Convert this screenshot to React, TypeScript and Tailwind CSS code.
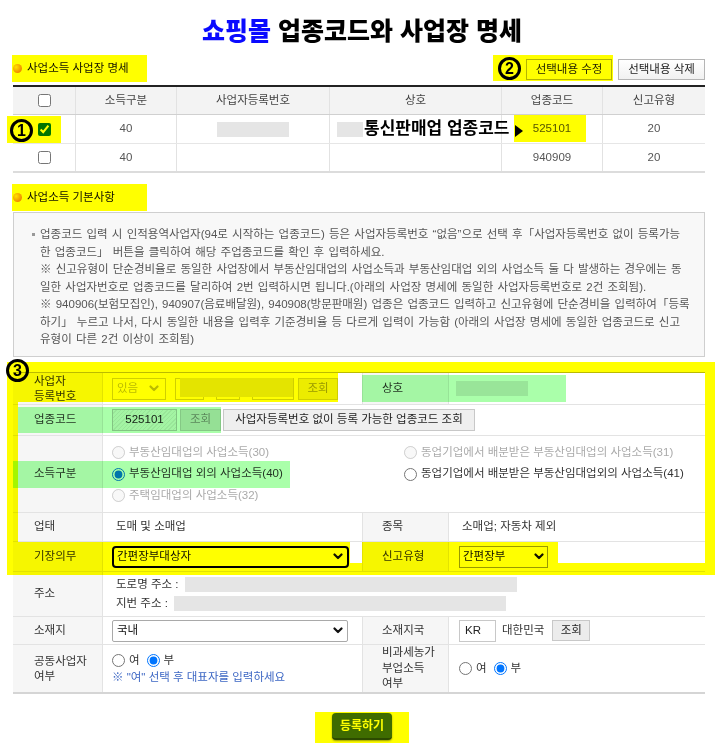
import React from "react";

const FONT = "font-['Liberation_Sans','Noto_Sans_CJK_KR',sans-serif]";
const HL = "pointer-events-none absolute mix-blend-multiply";
const BOX = "ml-[13px] w-[692px]";
const T1_COLS = "grid grid-cols-[63px_101px_153px_172px_101px_102px]";
const ROW = "grid grid-cols-[90px_259px_87px_256px] border-b border-[#e3e3e3]";
const LBL = "flex items-center border-r border-[#e3e3e3] bg-[#f6f6f6] pl-[21px] text-[#333]";
const LBL2 = "flex items-center border-x border-[#e3e3e3] bg-[#f6f6f6] pl-[19px] text-[#333]";

const infoLines = [
	"업종코드 입력 시 인적용역사업자(94로 시작하는 업종코드) 등은 사업자등록번호 “없음”으로 선택 후「사업자등록번호 없이 등록가능",
	"한 업종코드」 버튼을 클릭하여 해당 주업종코드를 확인 후 입력하세요.",
	"※ 신고유형이 단순경비율로 동일한 사업장에서 부동산임대업의 사업소득과 부동산임대업 외의 사업소득 둘 다 발생하는 경우에는 동",
	"일한 사업자번호로 업종코드를 달리하여 2번 입력하시면 됩니다.(아래의 사업장 명세에 동일한 사업자등록번호로 2건 조회됨).",
	"※ 940906(보험모집인), 940907(음료배달원), 940908(방문판매원) 업종은 업종코드 입력하고 신고유형에 단순경비을 입력하여「등록",
	"하기」 누르고 나서, 다시 동일한 내용을 입력후 기준경비율 등 다르게 입력이 가능함 (아래의 사업장 명세에 동일한 업종코드로 신고",
	"유형이 다른 2건 이상이 조회됨)",
];

function Chevron({ color = "#222" }: { color?: string }) {
	return (
		<svg width="10" height="7" viewBox="0 0 10 7" className="shrink-0">
			<path d="M1.5 1.5 L5 5 L8.5 1.5" fill="none" stroke={color} strokeWidth="2.2" strokeLinecap="round" strokeLinejoin="round" />
		</svg>
	);
}

function SectionTitle({ children }: { children: React.ReactNode }) {
	return (
		<div className="-ml-[1px] flex h-[27px] items-center pl-[1px] text-[#111]">
			<span className="h-[9px] w-[9px] rounded-full bg-[radial-gradient(circle_at_35%_35%,#ffe2a8,#f08a00_70%)]" />
			<span className="ml-[5px]">{children}</span>
		</div>
	);
}

function Radio({ label, checked = false, disabled = false, className = "" }: { label: string; checked?: boolean; disabled?: boolean; className?: string }) {
	return (
		<label className={`flex items-center gap-[4px] whitespace-nowrap ${disabled ? "text-[#aaa]" : "text-[#333]"} ${className}`}>
			<input type="radio" defaultChecked={checked} disabled={disabled} className="m-0 h-[13px] w-[13px] shrink-0" />
			{label}
		</label>
	);
}

function Circled({ n, className }: { n: string; className: string }) {
	return (
		<div className={`pointer-events-none absolute flex h-[23px] w-[23px] items-center justify-center rounded-full border-[3px] border-black text-[16px] font-bold leading-none text-black ${className}`}>
			{n}
		</div>
	);
}

export default function App() {
	return (
		<div className={`relative h-[747px] w-[724px] overflow-hidden bg-white text-[11.5px] leading-none text-[#333] ${FONT}`}>
			<h1 className="h-[55px] pt-[15px] text-center text-[25px] font-black leading-[32px] text-black">
				<span className="text-[#0a0aff]">쇼핑몰</span> 업종코드와 사업장 명세
			</h1>

			{/* 사업장 명세 */}
			<div className={`${BOX} flex h-[30px] items-start justify-between`}>
				<SectionTitle>사업소득 사업장 명세</SectionTitle>
				<div className="flex gap-[6px] pt-[4px]">
					<button className="h-[21px] w-[86px] border border-[#b5b5b5] bg-white text-[#222]">선택내용 수정</button>
					<button className="h-[21px] w-[87px] border border-[#b5b5b5] bg-gradient-to-b from-white to-[#f1f1f1] text-[#222]">선택내용 삭제</button>
				</div>
			</div>

			<div className={`${BOX} border-t-2 border-[#222]`}>
				<div className={`${T1_COLS} h-[28px] border-b border-[#d0d0d0] bg-[#f3f3f3] text-[#444]`}>
					<div className="flex items-center justify-center border-r border-[#e2e2e2]">
						<input type="checkbox" className="m-0 h-[13px] w-[13px]" />
					</div>
					<div className="flex items-center justify-center border-r border-[#e2e2e2]">소득구분</div>
					<div className="flex items-center justify-center border-r border-[#e2e2e2]">사업자등록번호</div>
					<div className="flex items-center justify-center border-r border-[#e2e2e2]">상호</div>
					<div className="flex items-center justify-center border-r border-[#e2e2e2]">업종코드</div>
					<div className="flex items-center justify-center">신고유형</div>
				</div>
				<div className={`${T1_COLS} h-[29px] border-b border-[#e6e6e6] text-[#555]`}>
					<div className="flex items-center justify-center border-r border-[#e2e2e2]">
						<input type="checkbox" defaultChecked className="m-0 h-[13px] w-[13px]" />
					</div>
					<div className="flex items-center justify-center border-r border-[#e2e2e2]">40</div>
					<div className="flex items-center justify-center border-r border-[#e2e2e2]">
						<span className="h-[15px] w-[72px] bg-[#e5e5e5]" />
					</div>
					<div className="flex items-center border-r border-[#e2e2e2] pl-[7px]">
						<span className="h-[15px] w-[26px] bg-[#e5e5e5]" />
					</div>
					<div className="flex items-center justify-center border-r border-[#e2e2e2]">525101</div>
					<div className="flex items-center justify-center">20</div>
				</div>
				<div className={`${T1_COLS} h-[29px] border-b-2 border-[#dcdcdc] text-[#555]`}>
					<div className="flex items-center justify-center border-r border-[#e2e2e2]">
						<input type="checkbox" className="m-0 h-[13px] w-[13px]" />
					</div>
					<div className="flex items-center justify-center border-r border-[#e2e2e2]">40</div>
					<div className="border-r border-[#e2e2e2]" />
					<div className="border-r border-[#e2e2e2]" />
					<div className="flex items-center justify-center border-r border-[#e2e2e2]">940909</div>
					<div className="flex items-center justify-center">20</div>
				</div>
			</div>

			{/* 기본사항 */}
			<div className={`${BOX} mt-[11px]`}>
				<SectionTitle>사업소득 기본사항</SectionTitle>
			</div>
			<div className={`${BOX} mt-[1px] h-[145px] border border-[#cfcfcf] bg-[#f8f8f8] pt-[13px] leading-[17.5px] text-[#555] [word-spacing:1px]`}>
				{infoLines.map((line, i) => (
					<div key={i} className="flex items-center whitespace-nowrap pl-[18px]">
						<span className={`mr-[5px] h-[3px] w-[3px] ${i === 0 ? "bg-[#999]" : "bg-transparent"}`} />
						{line}
					</div>
				))}
			</div>

			{/* 입력 폼 */}
			<div className={`${BOX} mt-[15px] border-t border-[#bbb]`}>
				<div className={`${ROW} h-[32px]`}>
					<div className={`${LBL} leading-[15px]`}>
						사업자
						<br />
						등록번호
					</div>
					<div className="flex items-center pl-[9px]">
						<div className="flex h-[22px] w-[54px] items-center justify-between border border-[#cfcfcf] bg-white pl-[4px] pr-[6px] text-[#bbb]">
							있음
							<Chevron color="#bbb" />
						</div>
						<span className="ml-[9px] h-[22px] w-[29px] border border-[#cfcfcf] bg-white" />
						<span className="ml-[12px] h-[22px] w-[24px] border border-[#cfcfcf] bg-white" />
						<span className="ml-[12px] h-[22px] w-[42px] border border-[#cfcfcf] bg-white" />
						<button className="ml-[4px] h-[22px] w-[40px] border border-[#cfcfcf] bg-[#ececec] text-[#999]">조회</button>
					</div>
					<div className={LBL2}>상호</div>
					<div className="flex items-center pl-[7px]">
						<span className="h-[15px] w-[72px] bg-[#e5e5e5]" />
					</div>
				</div>

				<div className="grid h-[31px] grid-cols-[90px_602px] border-b border-[#e3e3e3]">
					<div className={LBL}>업종코드</div>
					<div className="flex items-center pl-[9px]">
						<div className="flex h-[22px] w-[65px] items-center justify-center border border-[#c4c4c4] bg-[repeating-linear-gradient(135deg,#f4f4f4_0px,#f4f4f4_2px,#e6e6e6_2px,#e6e6e6_3px)] text-[#222]">
							525101
						</div>
						<button className="ml-[3px] h-[22px] w-[41px] border border-[#c8c8c8] bg-[#e0e0e0] text-[#888]">조회</button>
						<button className="ml-[2px] h-[22px] w-[252px] whitespace-nowrap border border-[#c8c8c8] bg-[#efefef] text-[#222]">
							사업자등록번호 없이 등록 가능한 업종코드 조회
						</button>
					</div>
				</div>

				<div className="grid h-[77px] grid-cols-[90px_602px] border-b border-[#e3e3e3]">
					<div className={LBL}>소득구분</div>
					<div className="grid grid-cols-[292px_1fr] content-center pl-[9px]">
						<div className="flex flex-col">
							<Radio label="부동산임대업의 사업소득(30)" disabled className="h-[21.5px]" />
							<Radio label="부동산임대업 외의 사업소득(40)" checked className="h-[21.5px]" />
							<Radio label="주택임대업의 사업소득(32)" disabled className="h-[21.5px]" />
						</div>
						<div className="flex flex-col">
							<Radio label="동업기업에서 배분받은 부동산임대업의 사업소득(31)" disabled className="h-[21.5px]" />
							<Radio label="동업기업에서 배분받은 부동산임대업외의 사업소득(41)" className="h-[21.5px]" />
						</div>
					</div>
				</div>

				<div className={`${ROW} h-[29px]`}>
					<div className={LBL}>업태</div>
					<div className="flex items-center pl-[13px]">도매 및 소매업</div>
					<div className={LBL2}>종목</div>
					<div className="flex items-center pl-[13px]">소매업; 자동차 제외</div>
				</div>

				<div className={`${ROW} h-[30px]`}>
					<div className={LBL}>기장의무</div>
					<div className="flex items-center pl-[9px]">
						<div className="flex h-[22px] w-[237px] items-center justify-between rounded-[4px] border-2 border-black bg-white pl-[3px] pr-[4px] text-[#111]">
							간편장부대상자
							<Chevron color="#111" />
						</div>
					</div>
					<div className={LBL2}>신고유형</div>
					<div className="flex items-center pl-[10px]">
						<div className="flex h-[22px] w-[89px] items-center justify-between border border-[#999] bg-white pl-[3px] pr-[3px] text-[#111]">
							간편장부
							<Chevron color="#111" />
						</div>
					</div>
				</div>

				<div className="grid h-[45px] grid-cols-[90px_602px] border-b border-[#e3e3e3]">
					<div className={LBL}>주소</div>
					<div className="flex flex-col justify-center pl-[13px]">
						<div className="flex h-[19px] items-center">
							도로명 주소 :<span className="ml-[6px] h-[15px] w-[332px] bg-[#e5e5e5]" />
						</div>
						<div className="flex h-[19px] items-center">
							지번 주소 :<span className="ml-[6px] h-[15px] w-[332px] bg-[#e5e5e5]" />
						</div>
					</div>
				</div>

				<div className={`${ROW} h-[28px]`}>
					<div className={LBL}>소재지</div>
					<div className="flex items-center pl-[9px]">
						<div className="flex h-[22px] w-[236px] items-center justify-between rounded-[2px] border border-[#a9a9a9] bg-white pl-[4px] pr-[4px] text-[#111]">
							국내
							<Chevron color="#111" />
						</div>
					</div>
					<div className={LBL2}>소재지국</div>
					<div className="flex items-center pl-[10px]">
						<div className="flex h-[22px] w-[37px] items-center border border-[#c8c8c8] pl-[5px] text-[#222]">KR</div>
						<span className="ml-[6px]">대한민국</span>
						<button className="ml-[8px] h-[21px] w-[38px] border border-[#c8c8c8] bg-[#ececec] text-[#222]">조회</button>
					</div>
				</div>

				<div className="grid h-[49px] grid-cols-[90px_259px_87px_256px] border-b-2 border-[#d5d5d5]">
					<div className={`${LBL} leading-[15px]`}>
						공동사업자
						<br />
						여부
					</div>
					<div className="flex flex-col justify-center gap-[5px] pl-[9px]">
						<div className="flex items-center gap-[7px]">
							<Radio label="여" />
							<Radio label="부" checked />
						</div>
						<div className="text-[#3d67c4]">※ "여" 선택 후 대표자를 입력하세요</div>
					</div>
					<div className={`${LBL2} leading-[15.5px]`}>
						비과세농가
						<br />
						부업소득
						<br />
						여부
					</div>
					<div className="flex items-center gap-[7px] pl-[10px]">
						<Radio label="여" />
						<Radio label="부" checked />
					</div>
				</div>
			</div>

			<div className="mt-[19px] flex justify-center">
				<button className="h-[27px] w-[60px] rounded-[4px] border-b-2 border-[#2c4a00] bg-[#3f6c00] text-[12px] font-bold text-[#ffff00] shadow-[0_1px_2px_rgba(0,0,0,0.4)]">
					등록하기
				</button>
			</div>

			{/* redaction over 사업자등록번호 */}
			<div className="pointer-events-none absolute left-[180px] top-[378px] h-[19px] w-[113px] bg-[#e4e4e4]" />

			{/* highlight annotations */}
			<div className={`${HL} left-[12px] top-[55px] h-[27px] w-[135px] bg-[#ffff00]`} />
			<div className={`${HL} left-[493px] top-[55px] h-[26px] w-[120px] bg-[#ffff00]`} />
			<div className={`${HL} left-[7px] top-[116px] h-[27px] w-[54px] bg-[#ffff00]`} />
			<div className={`${HL} left-[514px] top-[115px] h-[27px] w-[72px] bg-[#ffff00]`} />
			<div className={`${HL} left-[12px] top-[184px] h-[27px] w-[135px] bg-[#ffff00]`} />
			<div className={`${HL} left-[7px] top-[362px] h-[213px] w-[708px] border-t-[11px] border-r-[10px] border-b-[12px] border-l-[11px] border-[#ffff00]`} />
			<div className={`${HL} left-[18px] top-[373px] h-[29px] w-[320px] bg-[#ffff00]`} />
			<div className={`${HL} left-[18px] top-[542px] h-[21px] w-[332px] bg-[#ffff00]`} />
			<div className={`${HL} left-[362px] top-[542px] h-[21px] w-[196px] bg-[#ffff00]`} />
			<div className={`${HL} left-[315px] top-[712px] h-[31px] w-[94px] bg-[#ffff00]`} />
			<div className={`${HL} left-[362px] top-[375px] h-[27px] w-[204px] bg-[#aaffaa]`} />
			<div className={`${HL} left-[18px] top-[407px] h-[26px] w-[203px] bg-[#aaffaa]`} />
			<div className={`${HL} left-[13px] top-[461px] h-[27px] w-[277px] bg-[#aaffaa]`} />

			<Circled n="1" className="left-[10px] top-[119px]" />
			<Circled n="2" className="left-[498px] top-[57px]" />
			<Circled n="3" className="left-[6px] top-[359px]" />

			<div className="pointer-events-none absolute left-[364px] top-[119px] whitespace-nowrap text-[17px] font-bold leading-[20px] text-black">
				통신판매업 업종코드
			</div>
			<svg className="pointer-events-none absolute left-[515px] top-[125px]" width="8" height="12" viewBox="0 0 8 12">
				<polygon points="0,0 8,6 0,12" fill="#000" />
			</svg>
		</div>
	);
}
